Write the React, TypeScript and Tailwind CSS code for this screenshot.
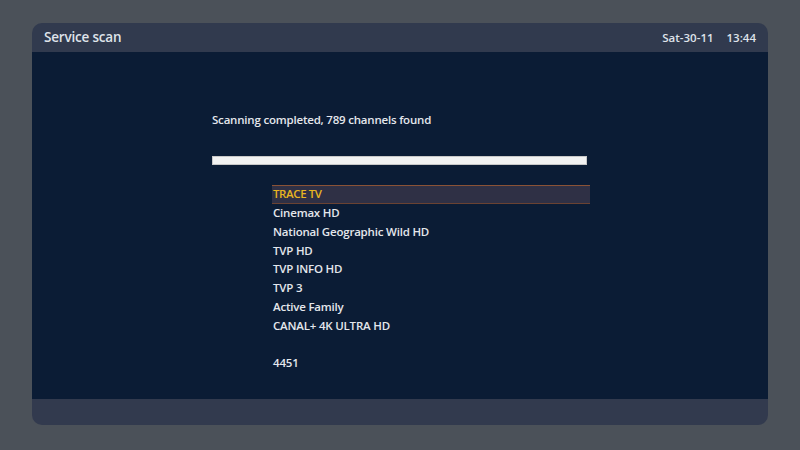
import React from "react";

const channels = [
  "Cinemax HD",
  "National Geographic Wild HD",
  "TVP HD",
  "TVP INFO HD",
  "TVP 3",
  "Active Family",
  "CANAL+ 4K ULTRA HD",
];

export default function App() {
  return (
    <div
      className="w-[800px] h-[450px] bg-[#4b5159] pt-[23px] pb-[25px] px-[32px] flex"
      style={{ fontFamily: '"Open Sans", "Noto Sans", sans-serif' }}
    >
      <div className="flex-1 flex flex-col rounded-[10px] overflow-hidden">
        <div className="h-[29px] bg-[#313a4e] flex items-center justify-between pl-[12px] pr-[12px] text-[#dfe3ea]">
          <span className="text-[13.5px] font-semibold tracking-[-0.2px]">Service scan</span>
          <div className="flex gap-[13px] text-[11.5px] font-semibold">
            <span>Sat-30-11</span>
            <span>13:44</span>
          </div>
        </div>
        <div className="flex-1 bg-[#0b1c35] flex flex-col pl-[180px] pt-[60px] text-[#e4e7ec] text-[11.5px] font-semibold tracking-[-0.2px]">
          <div className="h-[16px] leading-[16px]">Scanning completed, 789 channels found</div>
          <div className="mt-[28px] w-[375px] h-[9px] bg-[#f2f2f2] border border-[#c8c8c8]" />
          <div className="mt-[20px] ml-[60px] flex flex-col">
            <div className="w-[318px] h-[19px] leading-[15px] bg-[#2f3045] border-t border-b border-t-[#8a5236] border-b-[#6a4232] text-[#e8b521] pl-[1px] tracking-[-0.4px]">
              TRACE TV
            </div>
            {channels.map((c) => (
              <div key={c} className="h-[18.75px] leading-[17px] pl-[1px]">
                {c}
              </div>
            ))}
            <div className="h-[18.75px]" />
            <div className="h-[18.75px] leading-[17px] pl-[1px]">4451</div>
          </div>
        </div>
        <div className="h-[26px] bg-[#323a4e]" />
      </div>
    </div>
  );
}
